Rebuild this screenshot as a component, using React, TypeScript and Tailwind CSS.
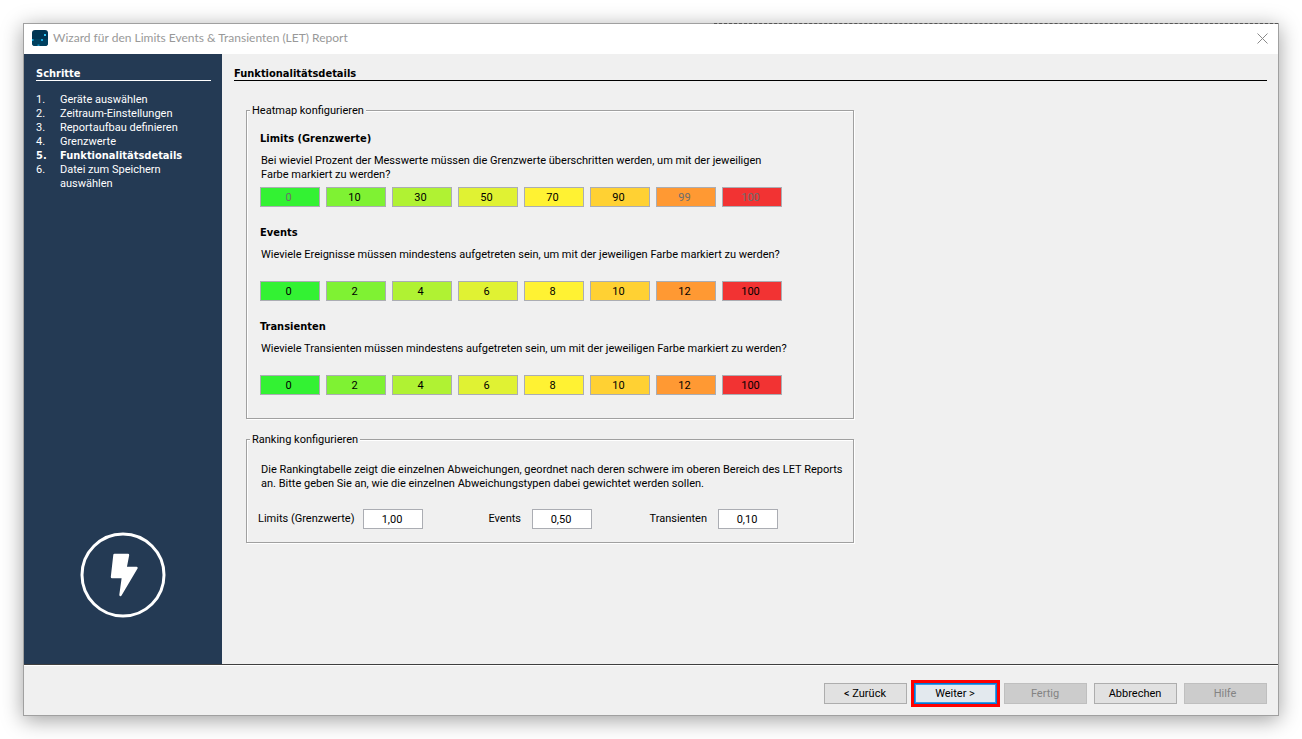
import React, { useState } from 'react';

interface Step {
  label: string;
  active?: boolean;
}

interface HeatmapSection {
  title: string;
  question: string;
  values: string[];
  locked: number[];
}

const STEPS: Step[] = [
  { label: 'Geräte auswählen' },
  { label: 'Zeitraum-Einstellungen' },
  { label: 'Reportaufbau definieren' },
  { label: 'Grenzwerte' },
  { label: 'Funktionalitätsdetails', active: true },
  { label: 'Datei zum Speichern auswählen' },
];

const HEAT_COLORS = [
  'bg-[#33f233]',
  'bg-[#7ff233]',
  'bg-[#b0f233]',
  'bg-[#e0f233]',
  'bg-[#fff233]',
  'bg-[#ffd133]',
  'bg-[#ff9933]',
  'bg-[#f23333]',
];

const SECTIONS: HeatmapSection[] = [
  {
    title: 'Limits (Grenzwerte)',
    question:
      'Bei wieviel Prozent der Messwerte müssen die Grenzwerte überschritten werden, um mit der jeweiligen Farbe markiert zu werden?',
    values: ['0', '10', '30', '50', '70', '90', '99', '100'],
    locked: [0, 6, 7],
  },
  {
    title: 'Events',
    question: 'Wieviele Ereignisse müssen mindestens aufgetreten sein, um mit der jeweiligen Farbe markiert zu werden?',
    values: ['0', '2', '4', '6', '8', '10', '12', '100'],
    locked: [],
  },
  {
    title: 'Transienten',
    question: 'Wieviele Transienten müssen mindestens aufgetreten sein, um mit der jeweiligen Farbe markiert zu werden?',
    values: ['0', '2', '4', '6', '8', '10', '12', '100'],
    locked: [],
  },
];

const WEIGHTS = [
  { id: 'weight-limits', label: 'Limits (Grenzwerte)', value: '1,00', width: 'w-[94px]' },
  { id: 'weight-events', label: 'Events', value: '0,50', width: 'w-[98px]' },
  { id: 'weight-transients', label: 'Transienten', value: '0,10', width: 'w-[115px]' },
];

const BOLD = "font-['DejaVu_Sans_Condensed','DejaVu_Sans',sans-serif] font-bold";

const TitleBar: React.FC = () => (
  <header className="relative flex h-[30px] items-center bg-white pb-[2px] pl-2 pr-[10px]">
    <div className="absolute -top-px right-0 w-[45%] border-t border-dashed border-[#555]" />
    <svg className="h-4 w-4" viewBox="0 0 16 16">
      <rect width="16" height="16" rx="3" fill="#003553" />
      <path d="M0 9h16v4a3 3 0 0 1-3 3H3a3 3 0 0 1-3-3z" fill="#00405f" />
      <rect x="12" y="4" width="2" height="2" fill="#2cc4f4" />
      <rect x="9" y="9" width="2" height="2" fill="#1aa9dc" />
      <rect x="0" y="9" width="1.5" height="2" fill="#1aa9dc" />
      <rect x="5.5" y="14.5" width="2" height="1.5" fill="#1590c0" />
    </svg>
    <h1 className="ml-[5px] flex-1 font-['Lato',sans-serif] text-[12px] leading-4 text-[#999]">
      Wizard für den Limits Events &amp; Transienten (LET) Report
    </h1>
    <button type="button" aria-label="Schließen" className="text-[#8a8a8a]">
      <svg className="h-[11px] w-[11px]" viewBox="0 0 11 11" stroke="currentColor" fill="none">
        <path d="M0.5 0.5 L10.5 10.5 M10.5 0.5 L0.5 10.5" />
      </svg>
    </button>
  </header>
);

const Sidebar: React.FC = () => (
  <aside className="flex w-[198px] shrink-0 flex-col bg-[#243a54] pb-[46px] pl-3 pr-[11px] pt-[13px] text-white">
    <h2 className={`border-b border-white leading-[13px] ${BOLD}`}>Schritte</h2>
    <ol className="mt-3">
      {STEPS.map((step, i) => (
        <li key={step.label} className={`flex ${step.active ? BOLD : ''}`}>
          <span className="w-6 shrink-0">{i + 1}.</span>
          <span className="max-w-[125px]">{step.label}</span>
        </li>
      ))}
    </ol>
    <svg className="ml-11 mt-auto h-[86px] w-[86px]" viewBox="0 0 86 86">
      <circle cx="43" cy="43" r="41" fill="none" stroke="#fff" strokeWidth="3" />
      <path
        d="M34.5 23 H48 L45.5 36 H56.5 L40.5 63 L43 45 H32 Z"
        fill="#fff"
        stroke="#fff"
        strokeWidth="2.4"
        strokeLinejoin="round"
      />
    </svg>
  </aside>
);

const GroupBox: React.FC<{ title: string; className?: string; children: React.ReactNode }> = ({
  title,
  className,
  children,
}) => (
  <fieldset
    className={`w-full max-w-[608px] min-w-0 border border-[#a0a0a0] pl-[13px] pr-1 shadow-[1px_1px_0_#fff,inset_1px_1px_0_#fff] ${className}`}
  >
    <legend className="-ml-[10px] bg-[#f0f0f0] px-[2px] pt-px leading-3">{title}</legend>
    {children}
  </fieldset>
);

const HeatmapRow: React.FC<{ section: HeatmapSection }> = ({ section }) => {
  const [values, setValues] = useState(section.values);

  return (
    <div>
      <h3 className={BOLD}>{section.title}</h3>
      <p className="mt-2 min-h-7 max-w-[530px] pl-px">{section.question}</p>
      <div className="mt-[5px] flex gap-[6px]">
        {values.map((value, i) => (
          <input
            key={i}
            type="text"
            aria-label={`${section.title} ${i + 1}`}
            value={value}
            disabled={section.locked.includes(i)}
            onChange={(e) => setValues(values.map((v, n) => (n === i ? e.target.value : v)))}
            className={`h-5 w-[60px] border border-[#abadb3] pr-[3px] text-center disabled:text-[#6d6d6d] ${HEAT_COLORS[i]}`}
          />
        ))}
      </div>
    </div>
  );
};

const BUTTON = 'h-[21px] w-[83px] border pr-px text-center';

const App: React.FC = () => {
  return (
    <div className="flex min-h-screen flex-col bg-white p-[23px] font-['Roboto',sans-serif] text-[11px] leading-[14px] text-black">
      <div className="flex flex-1 flex-col border border-[#a0a0a0] bg-[#f0f0f0] shadow-[0_4px_20px_rgba(0,0,0,0.38)]">
        <TitleBar />

        <div className="flex flex-1">
          <Sidebar />

          <main className="flex-1 pb-6 pl-3 pr-[11px] pt-[13px]">
            <h2 className={`border-b border-black leading-[13px] ${BOLD}`}>Funktionalitätsdetails</h2>

            <div className="ml-3 mt-[23px]">
              <GroupBox title="Heatmap konfigurieren" className="pb-[23px] pt-[15px]">
                <div className="flex flex-col gap-[19px]">
                  {SECTIONS.map((section) => (
                    <HeatmapRow key={section.title} section={section} />
                  ))}
                </div>
              </GroupBox>

              <GroupBox title="Ranking konfigurieren" className="mt-[14px] pb-[13px] pt-[17px]">
                <p className="pl-px">
                  Die Rankingtabelle zeigt die einzelnen Abweichungen, geordnet nach deren schwere im oberen Bereich des
                  LET Reports an. Bitte geben Sie an, wie die einzelnen Abweichungstypen dabei gewichtet werden sollen.
                </p>
                <div className="-ml-[2px] mt-[18px] flex items-center">
                  {WEIGHTS.map((w) => (
                    <React.Fragment key={w.id}>
                      <label htmlFor={w.id} className={`whitespace-nowrap text-right ${w.width}`}>
                        {w.label}
                      </label>
                      <input
                        id={w.id}
                        type="text"
                        defaultValue={w.value}
                        className="ml-[11px] h-5 w-[60px] border border-[#abadb3] bg-white pr-[2px] text-center"
                      />
                    </React.Fragment>
                  ))}
                </div>
              </GroupBox>
            </div>
          </main>
        </div>

        <footer className="flex h-[51px] items-start justify-end gap-[7px] border-t border-[#404040] pr-[11px] pt-[18px] shadow-[inset_0_1px_0_#fff]">
          <button type="button" className={`${BUTTON} border-[#adadad] bg-[#e1e1e1]`}>
            &lt; Zurück
          </button>
          <button
            type="button"
            className={`${BUTTON} border-[#0078d7] bg-[#e3e9ee] shadow-[inset_0_0_0_1px_#3c9ae4] outline-3 outline-[#ff0000]`}
          >
            Weiter &gt;
          </button>
          <button type="button" disabled className={`${BUTTON} border-[#bfbfbf] bg-[#cccccc] text-[#838383]`}>
            Fertig
          </button>
          <button type="button" className={`${BUTTON} border-[#adadad] bg-[#e1e1e1]`}>
            Abbrechen
          </button>
          <button type="button" disabled className={`${BUTTON} border-[#bfbfbf] bg-[#cccccc] text-[#838383]`}>
            Hilfe
          </button>
        </footer>
      </div>
    </div>
  );
};

export default App;
